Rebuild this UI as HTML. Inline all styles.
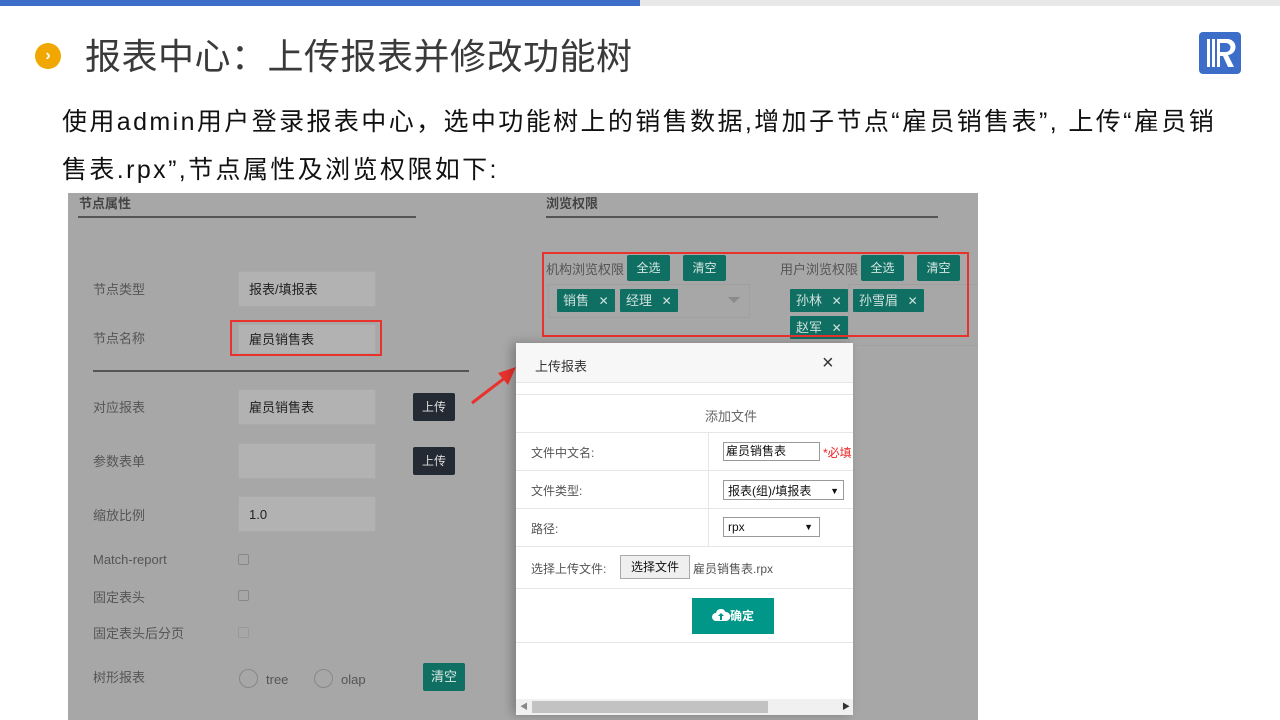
<!DOCTYPE html>
<html><head><meta charset="utf-8"><style>
*{margin:0;padding:0;box-sizing:border-box}
body{width:1280px;height:720px;position:relative;overflow:hidden;background:#fff;font-family:"Liberation Sans","Noto Sans CJK SC",sans-serif}
.a{position:absolute;white-space:nowrap}
.sh{position:absolute;left:68px;top:193px;width:910px;height:527px;background:#a7a7a7;overflow:hidden}
.lb{position:absolute;font-size:13px;color:#555}
.in{position:absolute;background:#b2b2b2;border:1px solid #aaa;font-size:13px;color:#222;padding-left:10px;line-height:36px;width:138px;height:36px}
.bd{position:absolute;background:#242a33;color:#ddd;font-size:12px;width:42px;height:28px;line-height:28px;text-align:center;border-radius:2px}
.gr{position:absolute;background:#0f6f62;color:#d8e8e4;font-size:12px;text-align:center;border-radius:2px}
.tag{position:absolute;background:#0f6f62;color:#d0e0dc;font-size:13px;height:23px;line-height:23px;padding-left:6px;border-radius:1px}
.cb{position:absolute;width:11px;height:11px;border:1px solid #888;border-radius:2px;background:#a7a7a7}
.ml{position:absolute;font-size:12px;color:#555}
.hl{position:absolute;left:0;width:337px;height:1px;background:#e6e6e6}
</style></head><body>
<div class="a" style="left:0;top:0;width:640px;height:6px;background:#3b6dc9"></div>
<div class="a" style="left:640px;top:0;width:640px;height:6px;background:#e8e8e8"></div>
<div class="a" style="left:35px;top:43px;width:26px;height:26px;border-radius:50%;background:#f0a800;color:#fff;font-size:16px;line-height:26px;text-align:center;font-weight:bold">›</div>
<div class="a" style="left:85px;top:32px;font-size:36px;color:#3a3a3a;line-height:50px;letter-spacing:0.5px">报表中心：上传报表并修改功能树</div>
<svg class="a" style="left:1199px;top:32px" width="42" height="42" viewBox="0 0 42 42"><rect x="0" y="0" width="42" height="42" rx="4" fill="#3b6dc9"/><rect x="8" y="7" width="3" height="28" fill="#fff"/><rect x="13" y="7" width="3" height="28" fill="#fff"/><path d="M18 7h10a8 8 0 0 1 1 16l6 12h-6l-5-11h-3v11h-3z M21 11v9h6a4.5 4.5 0 0 0 0-9z" fill="#fff" fill-rule="evenodd"/></svg>
<div class="a" style="left:62px;top:104px;font-size:25px;color:#111;line-height:36px;letter-spacing:2.4px">使用admin用户登录报表中心，选中功能树上的销售数据,增加子节点“雇员销售表”, 上传“雇员销</div>
<div class="a" style="left:62px;top:152px;font-size:25px;color:#111;line-height:36px;letter-spacing:2.4px">售表.rpx”,节点属性及浏览权限如下:</div>

<div class="sh">
<div class="a" style="left:11px;top:0;font-size:13px;font-weight:bold;color:#444">节点属性</div>
<div class="a" style="left:10px;top:23px;width:338px;height:2px;background:#555"></div>
<div class="a" style="left:478px;top:0;font-size:13px;font-weight:bold;color:#444">浏览权限</div>
<div class="a" style="left:478px;top:23px;width:392px;height:2px;background:#555"></div>

<div class="lb" style="left:25px;top:86px">节点类型</div>
<div class="in" style="left:170px;top:78px">报表/填报表</div>
<div class="lb" style="left:25px;top:135px">节点名称</div>
<div class="in" style="left:170px;top:131px;height:30px;line-height:30px">雇员销售表</div>
<div class="a" style="left:162px;top:127px;width:152px;height:36px;border:2px solid #e8322c"></div>
<div class="a" style="left:25px;top:177px;width:376px;height:2px;background:#555"></div>
<div class="lb" style="left:25px;top:204px">对应报表</div>
<div class="in" style="left:170px;top:196px">雇员销售表</div>
<div class="bd" style="left:345px;top:200px">上传</div>
<div class="lb" style="left:25px;top:258px">参数表单</div>
<div class="in" style="left:170px;top:250px"></div>
<div class="bd" style="left:345px;top:254px">上传</div>
<div class="lb" style="left:25px;top:312px">缩放比例</div>
<div class="in" style="left:170px;top:303px">1.0</div>
<div class="lb" style="left:25px;top:359px">Match-report</div>
<div class="cb" style="left:170px;top:361px"></div>
<div class="lb" style="left:25px;top:394px">固定表头</div>
<div class="cb" style="left:170px;top:397px"></div>
<div class="lb" style="left:25px;top:430px">固定表头后分页</div>
<div class="cb" style="left:170px;top:434px;border-color:#999"></div>
<div class="lb" style="left:25px;top:474px">树形报表</div>
<div class="a" style="left:171px;top:476px;width:19px;height:19px;border:1px solid #888;border-radius:50%"></div>
<div class="lb" style="left:198px;top:479px">tree</div>
<div class="a" style="left:246px;top:476px;width:19px;height:19px;border:1px solid #888;border-radius:50%"></div>
<div class="lb" style="left:273px;top:479px">olap</div>
<div class="gr" style="left:355px;top:470px;width:42px;height:28px;line-height:28px;font-size:13px">清空</div>

<div class="lb" style="left:478px;top:66px">机构浏览权限</div>
<div class="gr" style="left:559px;top:62px;width:43px;height:26px;line-height:26px">全选</div>
<div class="gr" style="left:615px;top:62px;width:43px;height:26px;line-height:26px">清空</div>
<div class="a" style="left:480px;top:91px;width:202px;height:34px;border:1px solid #a0a0a0"></div>
<div class="tag" style="left:489px;top:96px;width:58px">销售 <span style="font-size:12px;margin-left:6px">✕</span></div>
<div class="tag" style="left:552px;top:96px;width:58px">经理 <span style="font-size:12px;margin-left:6px">✕</span></div>
<div class="a" style="left:660px;top:104px;border:6px solid transparent;border-top:6px solid #8a8a8a"></div>
<div class="lb" style="left:712px;top:66px">用户浏览权限</div>
<div class="gr" style="left:793px;top:62px;width:43px;height:26px;line-height:26px">全选</div>
<div class="gr" style="left:849px;top:62px;width:43px;height:26px;line-height:26px">清空</div>
<div class="a" style="left:780px;top:91px;width:140px;height:62px;border:1px solid #a0a0a0"></div>
<div class="tag" style="left:722px;top:96px;width:58px">孙林 <span style="font-size:12px;margin-left:6px">✕</span></div>
<div class="tag" style="left:785px;top:96px;width:71px">孙雪眉 <span style="font-size:12px;margin-left:6px">✕</span></div>
<div class="tag" style="left:722px;top:123px;width:58px">赵军 <span style="font-size:12px;margin-left:6px">✕</span></div>
<div class="a" style="left:474px;top:59px;width:427px;height:85px;border:2px solid #e8322c"></div>
<svg class="a" style="left:400px;top:170px" width="52" height="44"><path d="M4 40 L38 14" stroke="#e8322c" stroke-width="3"/><path d="M48 4 L30 10 L40 22 Z" fill="#e8322c"/></svg>
</div>

<div class="a" style="left:516px;top:343px;width:337px;height:372px;background:#fff;box-shadow:-4px 0 10px rgba(0,0,0,.25)">
<div class="a" style="left:0;top:0;width:337px;height:40px;background:#f7f7f7;border-bottom:1px solid #e6e6e6"></div>
<div class="ml" style="left:19px;top:13px;color:#333;font-size:13px">上传报表</div>
<div class="a" style="left:306px;top:9px;font-size:20px;color:#333">×</div>
<div class="hl" style="top:51px"></div>
<div class="ml" style="left:189px;top:63px;font-size:13px;color:#666">添加文件</div>
<div class="hl" style="top:89px"></div>
<div class="hl" style="top:127px"></div>
<div class="hl" style="top:165px"></div>
<div class="hl" style="top:203px"></div>
<div class="hl" style="top:245px"></div>
<div class="hl" style="top:299px"></div>
<div class="a" style="left:192px;top:89px;width:1px;height:114px;background:#e6e6e6"></div>
<div class="ml" style="left:15px;top:101px">文件中文名:</div>
<div class="a" style="left:207px;top:99px;width:97px;height:19px;border:1px solid #999;font-size:12px;padding-left:2px;line-height:17px;color:#111">雇员销售表</div>
<div class="ml" style="left:307px;top:101px;color:#e22">*必填</div>
<div class="ml" style="left:15px;top:139px">文件类型:</div>
<div class="a" style="left:207px;top:137px;width:121px;height:20px;border:1px solid #999;font-size:12px;padding-left:4px;line-height:20px;color:#111">报表(组)/填报表<span style="position:absolute;right:4px;font-size:9px">▼</span></div>
<div class="ml" style="left:15px;top:177px">路径:</div>
<div class="a" style="left:207px;top:174px;width:97px;height:20px;border:1px solid #999;font-size:12px;padding-left:4px;line-height:18px;color:#111">rpx<span style="position:absolute;right:6px;font-size:9px">▼</span></div>
<div class="ml" style="left:15px;top:217px">选择上传文件:</div>
<div class="a" style="left:104px;top:212px;width:70px;height:24px;border:1px solid #aaa;background:#efefef;font-size:12px;line-height:22px;text-align:center;color:#111">选择文件</div>
<div class="ml" style="left:177px;top:217px">雇员销售表.rpx</div>
<div class="a" style="left:176px;top:255px;width:82px;height:36px;background:#009688;color:#fff;font-size:12px;line-height:36px;text-align:center;font-weight:bold"><svg width="18" height="12" viewBox="0 0 18 12" style="vertical-align:-1px"><path d="M4 12a4 4 0 0 1 0-8 5 5 0 0 1 9.5-1A4.5 4.5 0 0 1 14 12z" fill="#fff"/><path d="M9 4l-3 3h2v4h2V7h2z" fill="#009688"/></svg>确定</div>
<div class="a" style="left:0;top:356px;width:337px;height:16px;background:#f0f0f0"></div>
<div class="a" style="left:16px;top:358px;width:236px;height:12px;background:#c2c2c2"></div>
<div class="a" style="left:4px;top:358px;font-size:8px;color:#888">◀</div>
<div class="a" style="left:326px;top:358px;font-size:8px;color:#333">▶</div>
</div>
</body></html>
